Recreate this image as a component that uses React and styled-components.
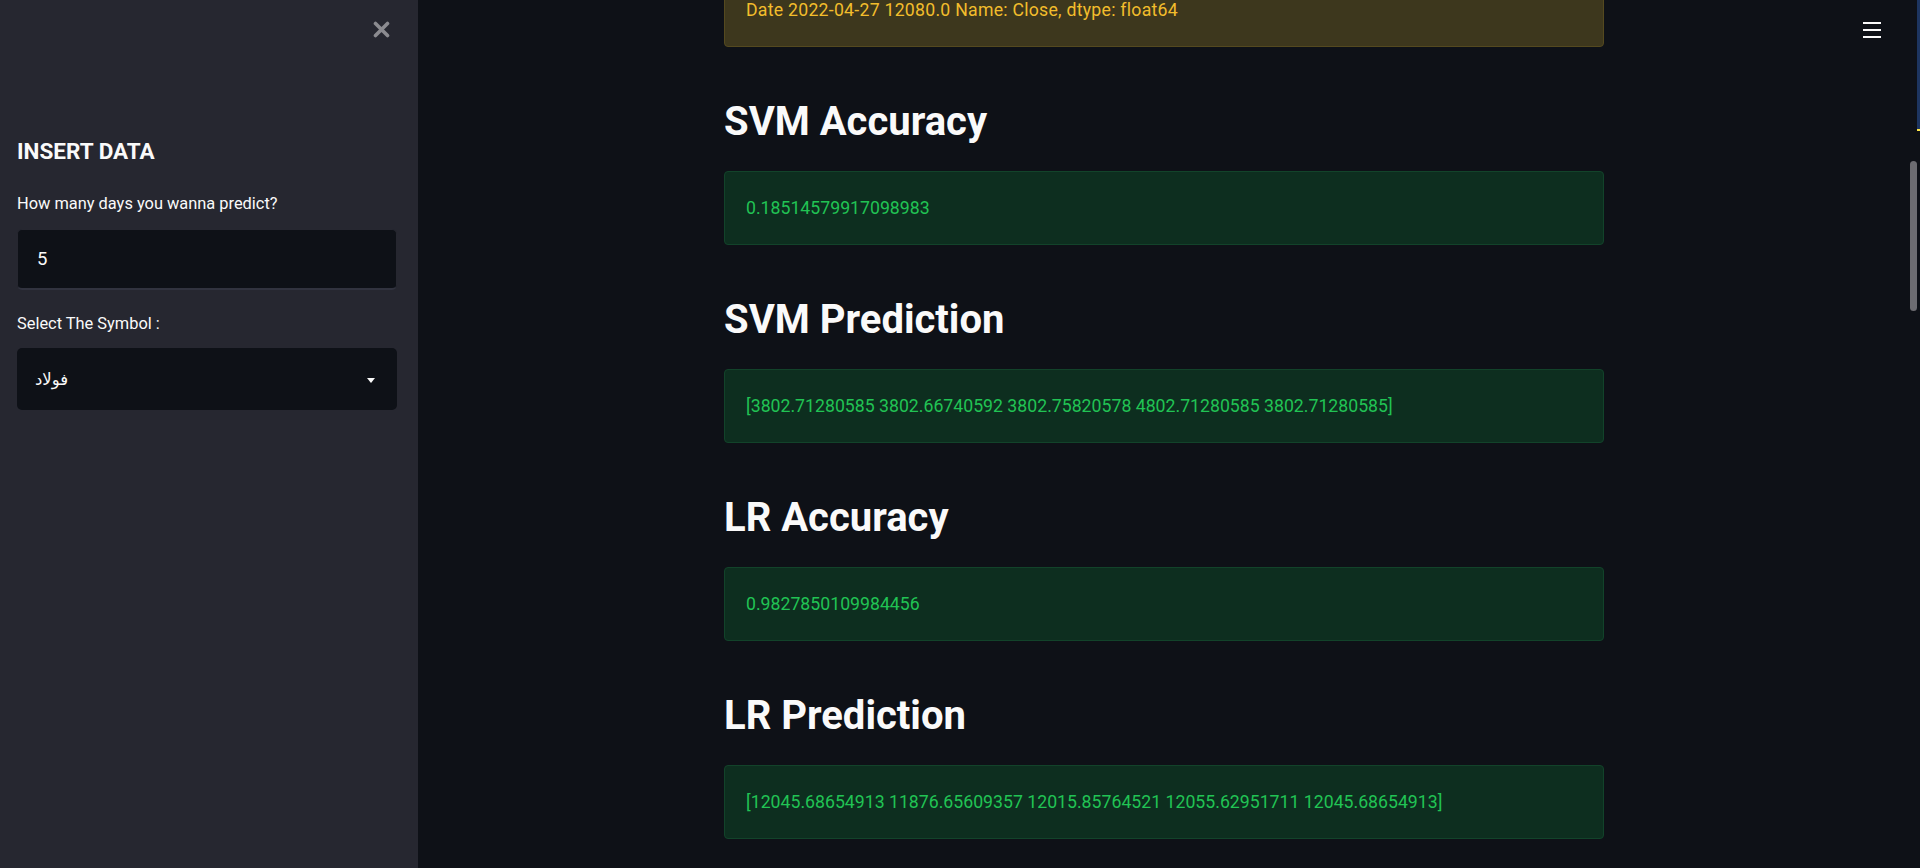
import React from 'react';
import styled, { createGlobalStyle } from 'styled-components';

const GlobalStyle = createGlobalStyle`
    html, body {
        margin: 0;
        padding: 0;
        height: 100%;
        background-color: #0e1117;
        overflow: hidden;
    }
    * {
        box-sizing: border-box;
    }
`

const Page = styled.div`
    display: flex;
    height: 100vh;
    background-color: #0e1117;
    color: #fafafa;
    font-family: Roboto, "Liberation Sans", sans-serif;
`

const Sidebar = styled.aside`
    width: 418px;
    flex-shrink: 0;
    background-color: #262730;
    display: flex;
    flex-direction: column;
    padding: 21px 21px 0 17px;
`

const CloseRow = styled.div`
    display: flex;
    justify-content: flex-end;
    padding-right: 7px;
    height: 17px;
`

const SideTitle = styled.h3`
    margin: 100px 0 0 0;
    font-size: 22.5px;
    line-height: 1.2;
    font-weight: 700;
    color: #fafafa;
`

const FieldLabel = styled.label`
    display: block;
    font-size: 16.4px;
    line-height: 1.5;
    color: #fafafa;
    margin-top: ${p => p.$top}px;
`

const InputBox = styled.div`
    margin-top: 12px;
    height: 61px;
    background-color: #0e1117;
    border-radius: 5px;
    border: 1px solid #262730;
    border-bottom: 2px solid #31333f;
    display: flex;
    align-items: center;
    padding-left: 19px;
    font-size: 18.5px;
    color: #fafafa;
`

const SelectBox = styled.div`
    margin-top: 12px;
    height: 62px;
    background-color: #0e1117;
    border-radius: 5px;
    display: flex;
    align-items: center;
    justify-content: space-between;
    padding: 0 22px 0 18px;
    font-family: "DejaVu Sans", Roboto, sans-serif;
    font-size: 16.5px;
    color: #fafafa;
`

const Caret = styled.span`
    width: 0;
    height: 0;
    border-left: 4.5px solid transparent;
    border-right: 4.5px solid transparent;
    border-top: 5px solid #fafafa;
    margin-top: 2px;
`

const Main = styled.main`
    flex: 1;
    display: flex;
    position: relative;
    overflow: hidden;
`

const Content = styled.div`
    flex: 1;
    display: flex;
    justify-content: center;
`

const Column = styled.div`
    width: 880px;
    display: flex;
    flex-direction: column;
    margin-top: -27px;
`

const Alert = styled.div`
    height: 74px;
    flex-shrink: 0;
    border-radius: 4px;
    padding: 0 21px;
    display: flex;
    align-items: center;
    font-size: 17.7px;
    background-color: ${p => (p.$kind === 'warning' ? '#3d371d' : '#0d2e1f')};
    color: ${p => (p.$kind === 'warning' ? '#f2bd2c' : '#21c354')};
    border: 1px solid ${p => (p.$kind === 'warning' ? '#54491f' : '#12432a')};
    letter-spacing: ${p => (p.$kind === 'warning' ? '0.25px' : '0')};
`

const Heading = styled.h2`
    margin: 51px 0 25px 0;
    font-size: 40px;
    line-height: 1.2;
    font-weight: 700;
    color: #fafafa;
    letter-spacing: 0;
`

const MenuButton = styled.div`
    position: absolute;
    top: 22px;
    right: 39px;
    width: 18px;
    height: 16px;
    display: flex;
    flex-direction: column;
    justify-content: space-between;
    span {
        display: block;
        height: 2px;
        background-color: #fafafa;
    }
`

const ScrollTrack = styled.div`
    width: 10px;
    display: grid;
    grid-template-columns: 7px 3px;
    align-items: start;
`

const Thumb = styled.div`
    margin-top: 161px;
    height: 150px;
    border-radius: 4px;
    background-color: #6c6c71;
`

const Decoration = styled.div`
    height: 131px;
    background-color: #1d3560;
    border-bottom: 2px solid #ffe84a;
`

function CloseIcon() {
    return (
        <svg width="17" height="17" viewBox="0 0 17 17">
            <path d="M2.5 2.5 L14.5 14.5 M14.5 2.5 L2.5 14.5" stroke="#8b8b90" strokeWidth="3.6" strokeLinecap="round" />
        </svg>
    );
}

const sections = [
    { title: 'SVM Accuracy', value: '0.18514579917098983' },
    { title: 'SVM Prediction', value: '[3802.71280585 3802.66740592 3802.75820578 4802.71280585 3802.71280585]' },
    { title: 'LR Accuracy', value: '0.9827850109984456' },
    { title: 'LR Prediction', value: '[12045.68654913 11876.65609357 12015.85764521 12055.62951711 12045.68654913]' },
];

function App() {
    return (
        <Page>
            <GlobalStyle />
            <Sidebar>
                <CloseRow>
                    <CloseIcon />
                </CloseRow>
                <SideTitle>INSERT DATA</SideTitle>
                <FieldLabel $top={27}>How many days you wanna predict?</FieldLabel>
                <InputBox>5</InputBox>
                <FieldLabel $top={22}>Select The Symbol :</FieldLabel>
                <SelectBox>
                    <span dir="rtl">فولاد</span>
                    <Caret />
                </SelectBox>
            </Sidebar>
            <Main>
                <Content>
                    <Column>
                        <Alert $kind="warning">Date 2022-04-27 12080.0 Name: Close, dtype: float64</Alert>
                        {sections.map(s => (
                            <React.Fragment key={s.title}>
                                <Heading>{s.title}</Heading>
                                <Alert $kind="success">{s.value}</Alert>
                            </React.Fragment>
                        ))}
                    </Column>
                </Content>
                <ScrollTrack>
                    <Thumb />
                    <Decoration />
                </ScrollTrack>
                <MenuButton>
                    <span />
                    <span />
                    <span />
                </MenuButton>
            </Main>
        </Page>
    );
}

export default App;
